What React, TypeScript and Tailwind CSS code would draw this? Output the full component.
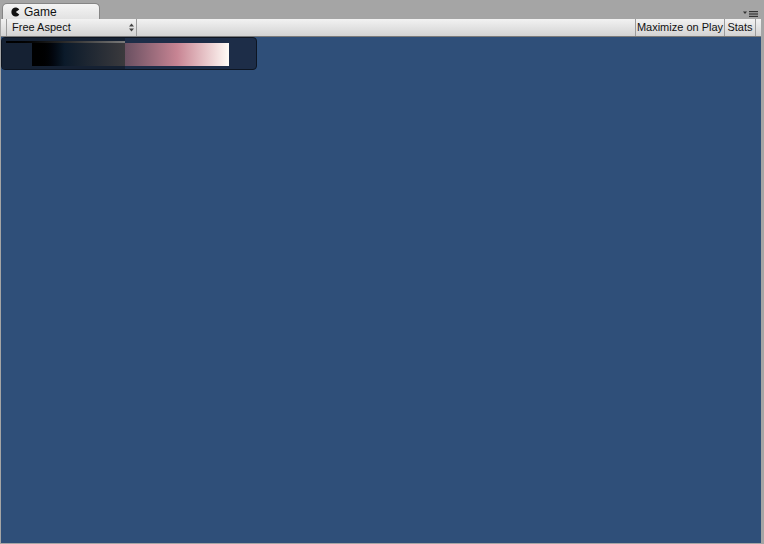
const font = { fontFamily: '"Liberation Sans", Arial, sans-serif' };

const GameIcon = () => (
  <svg width="9" height="10" viewBox="0 0 9 10" className="shrink-0">
    <path d="M8.3 2.6A4.3 4.5 0 1 0 8.3 7.4L4.8 5Z" fill="#111" />
  </svg>
);

const TabMenu = () => (
  <svg width="15" height="7" viewBox="0 0 15 7">
    <path d="M0 1.5h4L2 4Z" fill="#333" />
    <rect x="6" y="1" width="9" height="1.2" fill="#333" />
    <rect x="6" y="3.4" width="9" height="1.2" fill="#333" />
    <rect x="6" y="5.8" width="9" height="1.2" fill="#333" />
  </svg>
);

const UpDown = () => (
  <svg width="5" height="9" viewBox="0 0 5 9">
    <path d="M0 3.5h5L2.5 0.5Z" fill="#444" />
    <path d="M0 5.5h5L2.5 8.5Z" fill="#444" />
  </svg>
);

export default function App() {
  return (
    <div
      className="w-[764px] h-[544px] bg-[#a5a5a5] flex flex-col overflow-hidden"
      style={font}
    >
      {/* tab strip */}
      <div className="h-[19px] flex items-end justify-between shrink-0">
        <div className="ml-[2px] w-[98px] h-[16px] rounded-t-[5px] border border-b-0 border-[#858585] bg-gradient-to-b from-[#f4f4f4] to-[#e2e2e2] flex items-center gap-[4px] pl-[8px]">
          <GameIcon />
          <span className="text-[12px] leading-none text-[#111]">Game</span>
        </div>
        <div className="mr-[6px] mb-[2px]">
          <TabMenu />
        </div>
      </div>

      {/* toolbar */}
      <div className="h-[18px] shrink-0 flex items-stretch bg-gradient-to-b from-[#f2f2f2] to-[#d3d3d3] border-b border-[#7a7a7a] ml-[1px] mr-[3px] text-[11px] text-[#111]">
        <div className="ml-[5px] w-[131px] border-l border-r border-[#9c9c9c] flex items-center justify-between pl-[5px] pr-[2px]">
          <span>Free Aspect</span>
          <UpDown />
        </div>
        <div className="flex-1" />
        <div className="w-[89px] shrink-0 border-l border-[#9c9c9c] flex items-center justify-center">Maximize on Play</div>
        <div className="w-[32px] shrink-0 border-l border-r border-[#9c9c9c] flex items-center justify-center">Stats</div>
        <div className="w-[5px] shrink-0" />
      </div>

      {/* game view */}
      <div className="flex-1 relative bg-[#2f4f79] ml-[1px] mr-[3px] mb-[1px]">
        <div className="absolute left-0 top-0 w-[256px] h-[33px] rounded-[4px] border border-[#0d1522] bg-[#1d2d48] overflow-hidden">
          <div className="absolute left-0 top-0 w-[123px] h-[31px] bg-[#152133]" />
          <div className="absolute left-[4px] top-[3px] w-[119px] h-[2px] bg-gradient-to-r from-[#000] to-[#7a7a7a]" />
          <div className="absolute left-[30px] top-[5px] w-[93px] h-[23px] bg-gradient-to-r from-[#000] from-[5%] via-[#0b1a2a] via-[35%] to-[#3b3a3d]" />
          <div className="absolute left-[123px] top-[5px] w-[104px] h-[23px] bg-gradient-to-r from-[#6a5061] via-[#c78493] to-[#fffcf7]" />
        </div>
      </div>
    </div>
  );
}
